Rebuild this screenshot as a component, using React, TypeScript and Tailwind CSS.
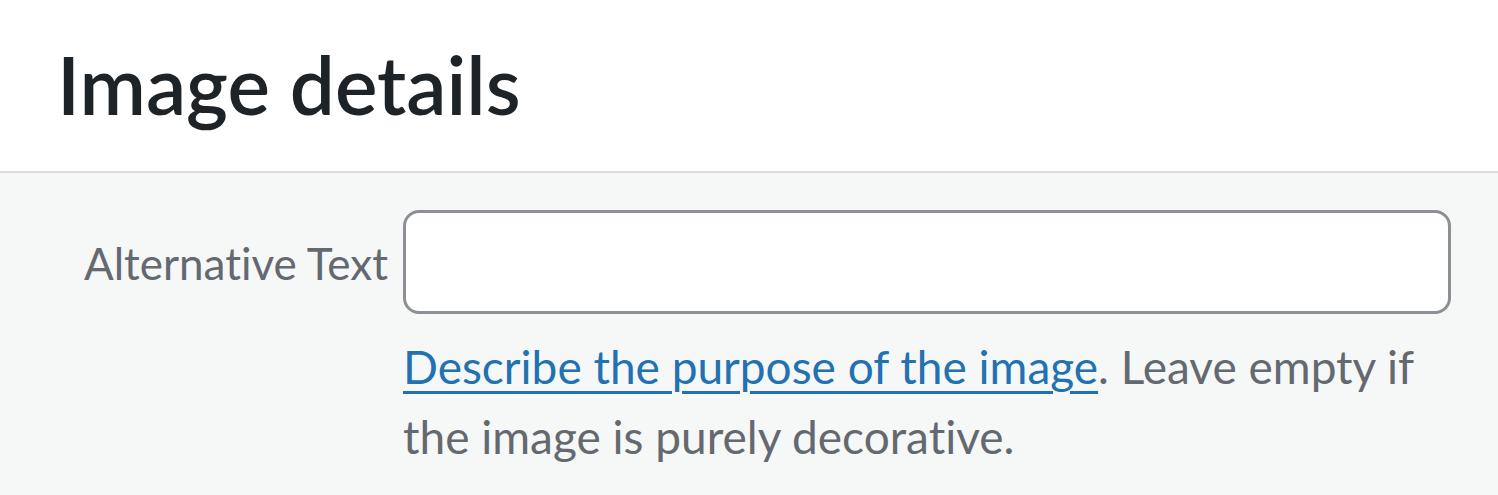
export default function App() {
  return (
    <div className="min-h-screen bg-[#f6f7f7] font-['Lato','Noto_Sans',sans-serif] [font-variant-ligatures:none]">
      {/* Title bar */}
      <div className="h-[173px] bg-white border-b-2 border-[#dcdcde] flex items-center px-[57px]">
        <h1 className="text-[80px] leading-none font-semibold text-[#1d2327] mt-[-4px]">
          Image details
        </h1>
      </div>

      {/* Alt text setting */}
      <div className="pt-[37px] flex items-start">
        <label
          htmlFor="alt-text"
          className="w-[388px] shrink-0 text-right text-[44px] leading-[70px] pt-[18px] text-[#646970]"
        >
          Alternative Text
        </label>
        <div className="ml-[15px] w-[1048px]">
          <input
            id="alt-text"
            type="text"
            className="block w-full h-[104px] bg-white border-[3px] border-[#8c8f94] rounded-[16px] outline-none"
          />
          <p className="mt-[18px] text-[46px] leading-[70px] text-[#646970]">
            <a href="#" className="text-[#2271b1] underline underline-offset-[7px] decoration-[3px]">
              Describe the purpose of the image
            </a>
            . Leave empty if the image is purely decorative.
          </p>
        </div>
      </div>
    </div>
  );
}
